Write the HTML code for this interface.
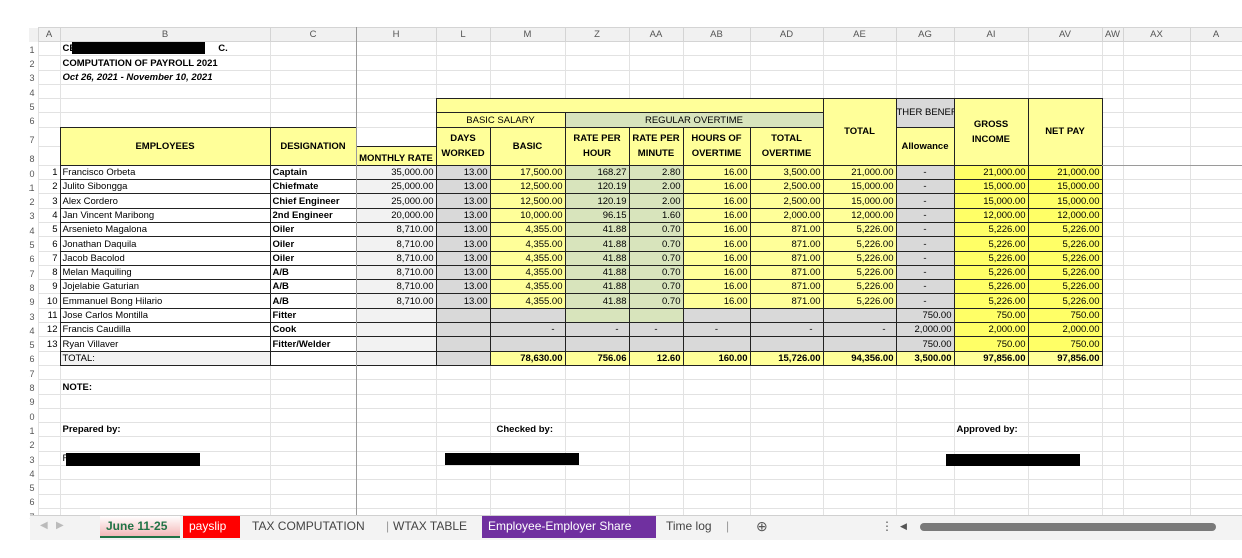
<!DOCTYPE html>
<html><head><meta charset="utf-8"><style>
*{margin:0;padding:0;box-sizing:border-box}
body{width:1242px;height:558px;background:#fff;overflow:hidden;position:relative;font-family:"Liberation Sans",Arial,sans-serif;font-size:9.5px;color:#000}
table{position:absolute;left:22px;top:27px;border-collapse:collapse;table-layout:fixed;width:1220px}
td{border:1px solid #e2e2e2;height:14.3px;padding:0 2px;white-space:nowrap;overflow:hidden;line-height:12px;vertical-align:bottom}
tr.ch td{background:#f1f1f1;color:#555;text-align:center;border:1px solid #d4d4d4;height:14px;vertical-align:middle}
td.rh{border:none;text-align:right;color:#555;font-size:9px;padding-right:3px}
tr.ch td.rh{background:#f1f1f1;border:none}
.r{text-align:right}.c{text-align:center}.b{font-weight:bold}
td.bd{border:1px double #222}
.y{background:#ffff99}.g{background:#d9d9d9}.lg{background:#f2f2f2}.gr{background:#d8e4bc}.by{background:#ffff66}
.hd{font-weight:bold;text-align:center;vertical-align:middle;white-space:normal;line-height:15px}
.bar{position:absolute;background:#000}
#tabs{position:absolute;left:30px;top:515px;width:1212px;height:25px;background:#f3f3f3;border-top:1px solid #d0d0d0;font-size:12px}
.t{position:absolute;top:0;height:22px;line-height:20px;padding:0 6px;color:#444}
</style></head><body>
<table>
<colgroup><col style="width:16px"><col style="width:22px"><col style="width:210px"><col style="width:86px"><col style="width:80px"><col style="width:54px"><col style="width:75px"><col style="width:64px"><col style="width:54px"><col style="width:67px"><col style="width:73px"><col style="width:73px"><col style="width:58px"><col style="width:74px"><col style="width:74px"><col style="width:21px"><col style="width:67px"><col style="width:52px"></colgroup>
<tr class="ch"><td class="rh"></td><td>A</td><td>B</td><td>C</td><td>H</td><td>L</td><td>M</td><td>Z</td><td>AA</td><td>AB</td><td>AD</td><td>AE</td><td>AG</td><td>AI</td><td>AV</td><td>AW</td><td>AX</td><td>A</td></tr>
<tr><td class="rh">1</td><td></td><td class="b">CE&nbsp;&nbsp;&nbsp;&nbsp;&nbsp;&nbsp;&nbsp;&nbsp;&nbsp;&nbsp;&nbsp;&nbsp;&nbsp;&nbsp;&nbsp;&nbsp;&nbsp;&nbsp;&nbsp;&nbsp;&nbsp;&nbsp;&nbsp;&nbsp;&nbsp;&nbsp;&nbsp;&nbsp;&nbsp;&nbsp;&nbsp;&nbsp;&nbsp;&nbsp;&nbsp;&nbsp;&nbsp;&nbsp;&nbsp;&nbsp;&nbsp;&nbsp;&nbsp;&nbsp;&nbsp;&nbsp;&nbsp;&nbsp;&nbsp;&nbsp;&nbsp;&nbsp;&nbsp;&nbsp;C.</td><td></td><td></td><td></td><td></td><td></td><td></td><td></td><td></td><td></td><td></td><td></td><td></td><td></td><td></td><td></td></tr>
<tr><td class="rh">2</td><td></td><td class="b">COMPUTATION OF PAYROLL 2021</td><td></td><td></td><td></td><td></td><td></td><td></td><td></td><td></td><td></td><td></td><td></td><td></td><td></td><td></td><td></td></tr>
<tr><td class="rh">3</td><td></td><td class="b"><i>Oct 26, 2021 - November 10, 2021</i></td><td></td><td></td><td></td><td></td><td></td><td></td><td></td><td></td><td></td><td></td><td></td><td></td><td></td><td></td><td></td></tr>
<tr><td class="rh">4</td><td></td><td></td><td></td><td></td><td></td><td></td><td></td><td></td><td></td><td></td><td></td><td></td><td></td><td></td><td></td><td></td><td></td></tr>
<tr><td class="rh">5</td><td></td><td></td><td></td><td></td><td class="bd y" colspan="6"></td><td class="bd y hd" rowspan="4">TOTAL</td><td class="bd g" rowspan="2" style="padding:0;vertical-align:middle;text-overflow:clip">THER BENEFI</td><td class="bd y hd" rowspan="4">GROSS<br>INCOME</td><td class="bd y hd" rowspan="4">NET PAY</td><td></td><td></td><td></td></tr>
<tr><td class="rh">6</td><td></td><td></td><td></td><td></td><td class="bd y c" colspan="2">BASIC SALARY</td><td class="bd gr c" colspan="4">REGULAR OVERTIME</td><td></td><td></td><td></td></tr>
<tr style="height:19px"><td class="rh" style="height:19px">7</td><td></td><td class="bd y hd" rowspan="2">EMPLOYEES</td><td class="bd y hd" rowspan="2">DESIGNATION</td><td></td><td class="bd y hd" rowspan="2">DAYS<br>WORKED</td><td class="bd y hd" rowspan="2">BASIC</td><td class="bd y hd" rowspan="2">RATE PER<br>HOUR</td><td class="bd y hd" rowspan="2">RATE PER<br>MINUTE</td><td class="bd y hd" rowspan="2">HOURS OF<br>OVERTIME</td><td class="bd y hd" rowspan="2">TOTAL<br>OVERTIME</td><td class="bd y hd" rowspan="2">Allowance</td><td></td><td></td><td></td></tr>
<tr style="height:19px"><td class="rh" style="height:19px">8</td><td></td><td class="bd y b c" style="padding:0">MONTHLY RATE</td><td></td><td></td><td></td></tr>

<tr><td class="rh">10</td><td class="r">1</td><td class="bd">Francisco Orbeta</td><td class="bd b">Captain</td><td class="bd lg r">35,000.00</td><td class="bd g r">13.00</td><td class="bd y r">17,500.00</td><td class="bd gr r">168.27</td><td class="bd gr r">2.80</td><td class="bd y r">16.00</td><td class="bd y r">3,500.00</td><td class="bd y r">21,000.00</td><td class="bd g c">-</td><td class="bd by r">21,000.00</td><td class="bd by r">21,000.00</td><td></td><td></td><td></td></tr>
<tr><td class="rh">11</td><td class="r">2</td><td class="bd">Julito Sibongga</td><td class="bd b">Chiefmate</td><td class="bd lg r">25,000.00</td><td class="bd g r">13.00</td><td class="bd y r">12,500.00</td><td class="bd gr r">120.19</td><td class="bd gr r">2.00</td><td class="bd y r">16.00</td><td class="bd y r">2,500.00</td><td class="bd y r">15,000.00</td><td class="bd g c">-</td><td class="bd by r">15,000.00</td><td class="bd by r">15,000.00</td><td></td><td></td><td></td></tr>
<tr><td class="rh">12</td><td class="r">3</td><td class="bd">Alex Cordero</td><td class="bd b">Chief Engineer</td><td class="bd lg r">25,000.00</td><td class="bd g r">13.00</td><td class="bd y r">12,500.00</td><td class="bd gr r">120.19</td><td class="bd gr r">2.00</td><td class="bd y r">16.00</td><td class="bd y r">2,500.00</td><td class="bd y r">15,000.00</td><td class="bd g c">-</td><td class="bd by r">15,000.00</td><td class="bd by r">15,000.00</td><td></td><td></td><td></td></tr>
<tr><td class="rh">13</td><td class="r">4</td><td class="bd">Jan Vincent Maribong</td><td class="bd b">2nd Engineer</td><td class="bd lg r">20,000.00</td><td class="bd g r">13.00</td><td class="bd y r">10,000.00</td><td class="bd gr r">96.15</td><td class="bd gr r">1.60</td><td class="bd y r">16.00</td><td class="bd y r">2,000.00</td><td class="bd y r">12,000.00</td><td class="bd g c">-</td><td class="bd by r">12,000.00</td><td class="bd by r">12,000.00</td><td></td><td></td><td></td></tr>
<tr><td class="rh">14</td><td class="r">5</td><td class="bd">Arsenieto Magalona</td><td class="bd b">Oiler</td><td class="bd lg r">8,710.00</td><td class="bd g r">13.00</td><td class="bd y r">4,355.00</td><td class="bd gr r">41.88</td><td class="bd gr r">0.70</td><td class="bd y r">16.00</td><td class="bd y r">871.00</td><td class="bd y r">5,226.00</td><td class="bd g c">-</td><td class="bd by r">5,226.00</td><td class="bd by r">5,226.00</td><td></td><td></td><td></td></tr>
<tr><td class="rh">15</td><td class="r">6</td><td class="bd">Jonathan Daquila</td><td class="bd b">Oiler</td><td class="bd lg r">8,710.00</td><td class="bd g r">13.00</td><td class="bd y r">4,355.00</td><td class="bd gr r">41.88</td><td class="bd gr r">0.70</td><td class="bd y r">16.00</td><td class="bd y r">871.00</td><td class="bd y r">5,226.00</td><td class="bd g c">-</td><td class="bd by r">5,226.00</td><td class="bd by r">5,226.00</td><td></td><td></td><td></td></tr>
<tr><td class="rh">16</td><td class="r">7</td><td class="bd">Jacob Bacolod</td><td class="bd b">Oiler</td><td class="bd lg r">8,710.00</td><td class="bd g r">13.00</td><td class="bd y r">4,355.00</td><td class="bd gr r">41.88</td><td class="bd gr r">0.70</td><td class="bd y r">16.00</td><td class="bd y r">871.00</td><td class="bd y r">5,226.00</td><td class="bd g c">-</td><td class="bd by r">5,226.00</td><td class="bd by r">5,226.00</td><td></td><td></td><td></td></tr>
<tr><td class="rh">17</td><td class="r">8</td><td class="bd">Melan Maquiling</td><td class="bd b">A/B</td><td class="bd lg r">8,710.00</td><td class="bd g r">13.00</td><td class="bd y r">4,355.00</td><td class="bd gr r">41.88</td><td class="bd gr r">0.70</td><td class="bd y r">16.00</td><td class="bd y r">871.00</td><td class="bd y r">5,226.00</td><td class="bd g c">-</td><td class="bd by r">5,226.00</td><td class="bd by r">5,226.00</td><td></td><td></td><td></td></tr>
<tr><td class="rh">18</td><td class="r">9</td><td class="bd">Jojelabie Gaturian</td><td class="bd b">A/B</td><td class="bd lg r">8,710.00</td><td class="bd g r">13.00</td><td class="bd y r">4,355.00</td><td class="bd gr r">41.88</td><td class="bd gr r">0.70</td><td class="bd y r">16.00</td><td class="bd y r">871.00</td><td class="bd y r">5,226.00</td><td class="bd g c">-</td><td class="bd by r">5,226.00</td><td class="bd by r">5,226.00</td><td></td><td></td><td></td></tr>
<tr><td class="rh">19</td><td class="r">10</td><td class="bd">Emmanuel Bong Hilario</td><td class="bd b">A/B</td><td class="bd lg r">8,710.00</td><td class="bd g r">13.00</td><td class="bd y r">4,355.00</td><td class="bd gr r">41.88</td><td class="bd gr r">0.70</td><td class="bd y r">16.00</td><td class="bd y r">871.00</td><td class="bd y r">5,226.00</td><td class="bd g c">-</td><td class="bd by r">5,226.00</td><td class="bd by r">5,226.00</td><td></td><td></td><td></td></tr>
<tr><td class="rh">23</td><td class="r">11</td><td class="bd">Jose Carlos Montilla</td><td class="bd b">Fitter</td><td class="bd lg"></td><td class="bd g"></td><td class="bd g"></td><td class="bd gr"></td><td class="bd gr"></td><td class="bd g"></td><td class="bd g"></td><td class="bd g"></td><td class="bd g r">750.00</td><td class="bd by r">750.00</td><td class="bd by r">750.00</td><td></td><td></td><td></td></tr>
<tr><td class="rh">24</td><td class="r">12</td><td class="bd">Francis Caudilla</td><td class="bd b">Cook</td><td class="bd lg"></td><td class="bd g"></td><td class="bd g r">- &nbsp;&nbsp;</td><td class="bd g r">- &nbsp;&nbsp;</td><td class="bd g c">-</td><td class="bd g c">-</td><td class="bd g r">- &nbsp;&nbsp;</td><td class="bd g r">- &nbsp;&nbsp;</td><td class="bd g r">2,000.00</td><td class="bd by r">2,000.00</td><td class="bd by r">2,000.00</td><td></td><td></td><td></td></tr>
<tr><td class="rh">25</td><td class="r">13</td><td class="bd">Ryan Villaver</td><td class="bd b">Fitter/Welder</td><td class="bd lg"></td><td class="bd g"></td><td class="bd g"></td><td class="bd g"></td><td class="bd g"></td><td class="bd g"></td><td class="bd g"></td><td class="bd g"></td><td class="bd g r">750.00</td><td class="bd by r">750.00</td><td class="bd by r">750.00</td><td></td><td></td><td></td></tr>
<tr><td class="rh">26</td><td></td><td class="bd lg">TOTAL:</td><td class="bd"></td><td class="bd lg"></td><td class="bd g"></td><td class="bd y r b">78,630.00</td><td class="bd y r b">756.06</td><td class="bd y r b">12.60</td><td class="bd y r b">160.00</td><td class="bd y r b">15,726.00</td><td class="bd y r b">94,356.00</td><td class="bd y r b">3,500.00</td><td class="bd y r b">97,856.00</td><td class="bd y r b">97,856.00</td><td></td><td></td><td></td></tr>
<tr><td class="rh">27</td><td></td><td></td><td></td><td></td><td></td><td></td><td></td><td></td><td></td><td></td><td></td><td></td><td></td><td></td><td></td><td></td><td></td></tr>
<tr><td class="rh">28</td><td></td><td class="b">NOTE:</td><td></td><td></td><td></td><td></td><td></td><td></td><td></td><td></td><td></td><td></td><td></td><td></td><td></td><td></td><td></td></tr>
<tr><td class="rh">29</td><td></td><td></td><td></td><td></td><td></td><td></td><td></td><td></td><td></td><td></td><td></td><td></td><td></td><td></td><td></td><td></td><td></td></tr>
<tr><td class="rh">30</td><td></td><td></td><td></td><td></td><td></td><td></td><td></td><td></td><td></td><td></td><td></td><td></td><td></td><td></td><td></td><td></td><td></td></tr>
<tr><td class="rh">31</td><td></td><td class="b">Prepared by:</td><td></td><td></td><td></td><td class="b" style="overflow:visible;padding-left:6px">Checked by:</td><td></td><td></td><td></td><td></td><td></td><td></td><td class="b" style="overflow:visible">Approved by:</td><td></td><td></td><td></td><td></td></tr>
<tr><td class="rh">32</td><td></td><td></td><td></td><td></td><td></td><td></td><td></td><td></td><td></td><td></td><td></td><td></td><td></td><td></td><td></td><td></td><td></td></tr>
<tr><td class="rh">33</td><td></td><td>F</td><td></td><td></td><td></td><td></td><td></td><td></td><td></td><td></td><td></td><td></td><td></td><td></td><td></td><td></td><td></td></tr>
<tr><td class="rh">34</td><td></td><td></td><td></td><td></td><td></td><td></td><td></td><td></td><td></td><td></td><td></td><td></td><td></td><td></td><td></td><td></td><td></td></tr>
<tr><td class="rh">35</td><td></td><td></td><td></td><td></td><td></td><td></td><td></td><td></td><td></td><td></td><td></td><td></td><td></td><td></td><td></td><td></td><td></td></tr>
<tr><td class="rh">36</td><td></td><td></td><td></td><td></td><td></td><td></td><td></td><td></td><td></td><td></td><td></td><td></td><td></td><td></td><td></td><td></td><td></td></tr>
<tr><td class="rh">37</td><td></td><td></td><td></td><td></td><td></td><td></td><td></td><td></td><td></td><td></td><td></td><td></td><td></td><td></td><td></td><td></td><td></td></tr>
</table>
<div style="position:absolute;left:0;top:0;width:29px;height:558px;background:#fff"></div>
<div style="position:absolute;left:356px;top:27px;width:1px;height:488px;background:#9a9a9a"></div>
<div style="position:absolute;left:1102px;top:165px;width:140px;height:1px;background:#9a9a9a"></div>
<div class="bar" style="left:72px;top:42px;width:133px;height:12px"></div>
<div class="bar" style="left:66px;top:453px;width:134px;height:13px"></div>
<div class="bar" style="left:445px;top:453px;width:134px;height:12px"></div>
<div class="bar" style="left:946px;top:454px;width:134px;height:12px"></div>
<div id="tabs">
<span class="t" style="left:4px;color:#bbb;font-size:10px">&#9664;&nbsp;&nbsp;&nbsp;&#9654;</span>
<span class="t" style="left:70px;width:80px;background:linear-gradient(#fff,#f4b8b8);color:#217346;font-weight:bold;border-bottom:2px solid #217346">June 11-25</span>
<span class="t" style="left:153px;width:57px;background:#ff0000;color:#fff">payslip</span>
<span class="t" style="left:216px">TAX COMPUTATION</span>
<span class="t" style="left:350px;color:#999">|</span>
<span class="t" style="left:357px">WTAX TABLE</span>
<span class="t" style="left:452px;width:174px;background:#7030a0;color:#fff">Employee-Employer Share</span>
<span class="t" style="left:630px">Time log</span>
<span class="t" style="left:690px;color:#999">|</span>
<span class="t" style="left:720px;font-size:14px;color:#555">&#8853;</span>
<span class="t" style="left:845px;color:#555">&#8942;</span>
<span class="t" style="left:864px;color:#555;font-size:9px">&#9664;</span>
<div style="position:absolute;left:890px;top:7px;width:296px;height:8px;border-radius:4px;background:#7a7a7a"></div>
</div>
</body></html>
